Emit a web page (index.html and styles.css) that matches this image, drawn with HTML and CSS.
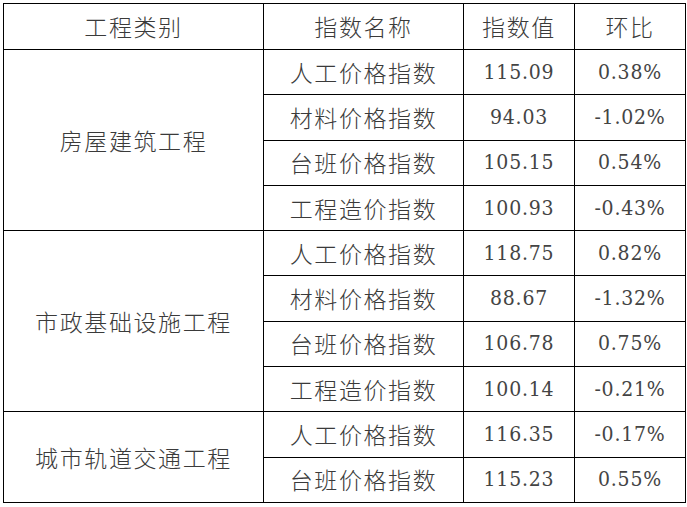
FILE: index.html
```html
<!DOCTYPE html>
<html>
<head>
<meta charset="utf-8">
<link rel="stylesheet" href="styles.css">
</head>
<body>
<table class="idx">
  <colgroup>
    <col class="c1"><col class="c2"><col class="c3"><col class="c4">
  </colgroup>
  <thead>
    <tr class="hd"><th>工程类别</th><th>指数名称</th><th>指数值</th><th>环比</th></tr>
  </thead>
  <tbody>
    <tr><td rowspan="4" class="cat">房屋建筑工程</td><td>人工价格指数</td><td class="num">115.09</td><td class="num">0.38%</td></tr>
    <tr><td>材料价格指数</td><td class="num">94.03</td><td class="num">-1.02%</td></tr>
    <tr><td>台班价格指数</td><td class="num">105.15</td><td class="num">0.54%</td></tr>
    <tr><td>工程造价指数</td><td class="num">100.93</td><td class="num">-0.43%</td></tr>
    <tr><td rowspan="4" class="cat">市政基础设施工程</td><td>人工价格指数</td><td class="num">118.75</td><td class="num">0.82%</td></tr>
    <tr><td>材料价格指数</td><td class="num">88.67</td><td class="num">-1.32%</td></tr>
    <tr><td>台班价格指数</td><td class="num">106.78</td><td class="num">0.75%</td></tr>
    <tr><td>工程造价指数</td><td class="num">100.14</td><td class="num">-0.21%</td></tr>
    <tr><td rowspan="2" class="cat">城市轨道交通工程</td><td>人工价格指数</td><td class="num">116.35</td><td class="num">-0.17%</td></tr>
    <tr><td>台班价格指数</td><td class="num">115.23</td><td class="num">0.55%</td></tr>
  </tbody>
</table>
</body>
</html>
```

FILE: styles.css
```css
html, body {
  margin: 0;
  padding: 0;
  background: #ffffff;
}
body {
  padding: 3px;
}
.idx {
  border-collapse: collapse;
  table-layout: fixed;
  width: 682px;
  font-family: "Noto Sans CJK SC", "Noto Sans", sans-serif;
  font-size: 23px;
  color: #3a3a3a;
}
.c1 { width: 260px; }
.c2 { width: 200px; }
.c3 { width: 111px; }
.c4 { width: 111px; }
.idx th,
.idx td {
  border: 1px solid #000;
  padding: 0;
  text-align: center;
  vertical-align: middle;
  font-weight: 300;
  letter-spacing: 1.6px;
  line-height: 1;
}
.idx tr.hd { height: 46px; }
.idx tbody tr { height: 45.3px; }
.idx td.num {
  font-family: "DejaVu Serif Condensed", "DejaVu Serif", serif;
  font-stretch: condensed;
  font-size: 21px;
  letter-spacing: 0.8px;
  font-weight: normal;
  color: #444;
}
```
